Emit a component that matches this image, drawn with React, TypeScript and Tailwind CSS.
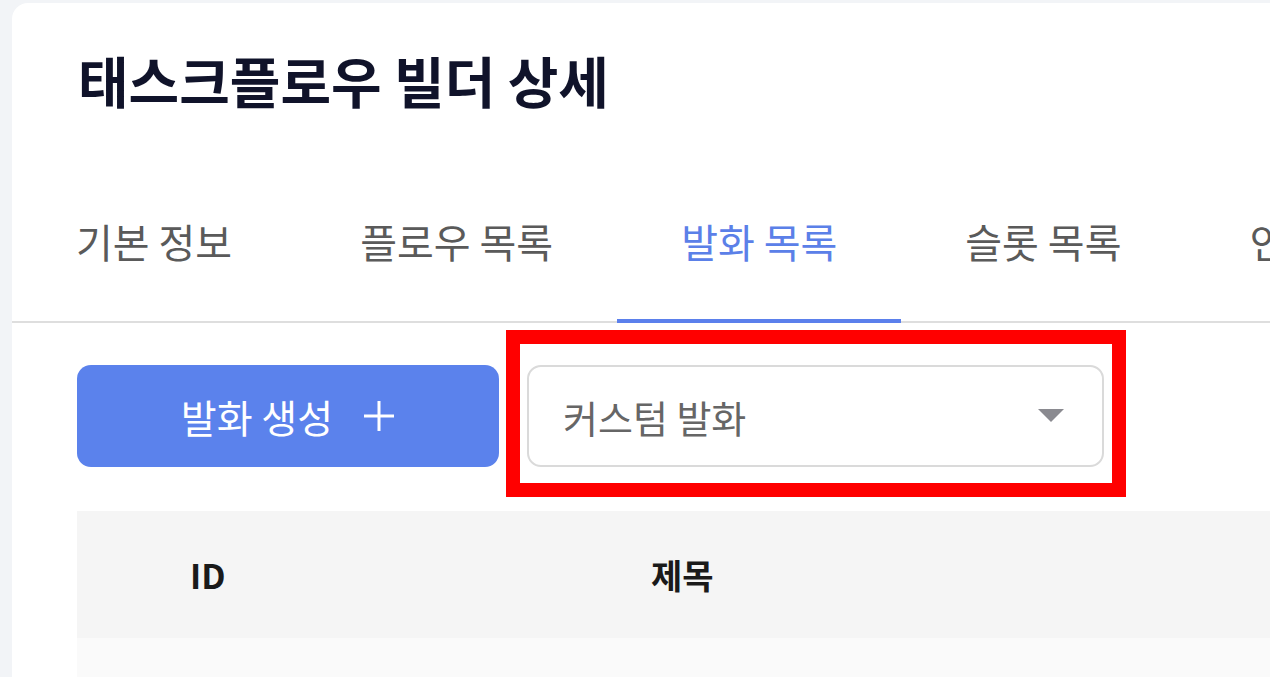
import React from 'react'

const tabs = ['기본 정보', '플로우 목록', '발화 목록', '슬롯 목록', '인텐트 목록']

const font = { fontFamily: '"Noto Sans CJK KR", "Noto Sans", sans-serif' }

const TabBar: React.FC<{ active: number }> = ({ active }) => (
  <div className="flex border-b-2 border-[#dedede] whitespace-nowrap">
    {tabs.map((t, i) => (
      <div
        key={t}
        className={
          'h-[160px] flex items-center px-[64px] text-[40px] border-b-4 -mb-[2px] ' +
          (i === active ? 'text-[#5b80e8] border-[#5b80ec]' : 'text-[#5a5a5a] border-transparent')
        }
      >
        {t}
      </div>
    ))}
  </div>
)

const Toolbar: React.FC = () => (
  <div className="flex gap-[28px] pl-[65px] mt-[42px]">
    <button className="w-[422px] h-[102px] rounded-[14px] bg-[#5b82ec] text-white text-[39px] flex items-center justify-center gap-[30px]">
      <span>발화 생성</span>
      <svg width="32" height="32" viewBox="0 0 32 32">
        <path d="M16 1 V31 M1 16 H31" stroke="#ffffff" strokeWidth="3" />
      </svg>
    </button>
    <div className="relative">
      <div className="w-[577px] h-[102px] rounded-[14px] border-2 border-[#dadada] flex items-center justify-between pl-[34px] pr-[38px] text-[38px] text-[#666666] bg-white">
        <span>커스텀 발화</span>
        <svg width="26" height="14" viewBox="0 0 26 14">
          <path d="M0 0 L26 0 L13 13 Z" fill="#8a8a90" />
        </svg>
      </div>
      <div className="absolute left-[-21px] right-[-22px] top-[-35px] bottom-[-30px] border-[14px] border-[#ff0000] pointer-events-none" />
    </div>
  </div>
)

const Table: React.FC = () => (
  <div className="ml-[65px] mt-[44px]">
    <div className="flex h-[127px] bg-[#f5f5f5] items-center text-[34px] font-bold text-[#1a1a1a]">
      <div className="w-[574px] pl-[113px]">ID</div>
      <div>제목</div>
    </div>
    <div className="h-[60px] bg-[#fafafa]" />
  </div>
)

export default function App() {
  return (
    <div className="h-[677px] overflow-hidden bg-[#f2f4f7] pl-3 pt-[3px]" style={font}>
      <div className="w-[1400px] h-full bg-white rounded-tl-2xl">
        <h1 className="pt-[46px] pl-[66px] text-[55px] leading-[60px] font-bold text-[#10132a]">
          태스크플로우 빌더 상세
        </h1>
        <div className="mt-[54px]">
          <TabBar active={2} />
        </div>
        <Toolbar />
        <Table />
      </div>
    </div>
  )
}
